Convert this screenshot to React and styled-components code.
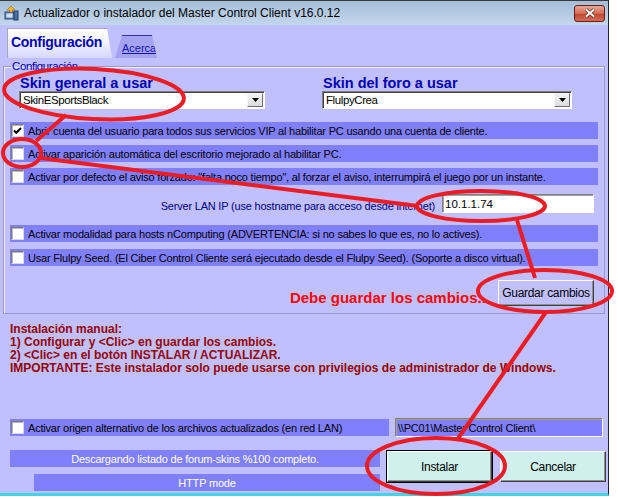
import React from 'react';
import styled, { createGlobalStyle } from 'styled-components';

const GlobalStyle = createGlobalStyle`
  html, body {
    margin: 0;
    padding: 0;
    background: #ffffff;
  }
  body {
    font-family: "Liberation Sans", Arial, sans-serif;
    font-size: 11px;
  }
`;

const Page = styled.div`
  position: relative;
  width: 618px;
  height: 499px;
  overflow: hidden;
`;

const Window = styled.div`
  width: 609px;
  height: 496px;
  box-sizing: border-box;
  border-top: 1px solid #3a3a3a;
  border-right: 1px solid #1b2535;
  border-bottom: 3px solid #3fd5e6;
  background: #c0c0ff;
  display: flex;
  flex-direction: column;
`;

const TitleBar = styled.div`
  height: 24px;
  flex: none;
  display: flex;
  align-items: center;
  padding: 0 3px 0 3px;
  background: linear-gradient(#a4bdd8, #b6cce3 55%, #c3d7eb);
`;

const TitleText = styled.span`
  margin-left: 5px;
  font-size: 12px;
  color: #000;
  white-space: nowrap;
`;

const CloseButton = styled.div`
  margin-left: auto;
  width: 31px;
  height: 17px;
  box-sizing: border-box;
  border: 1px solid #6b1d13;
  border-radius: 3px;
  background: linear-gradient(#e8a898, #d46a55 50%, #c2412c 51%, #d0705a);
  display: flex;
  align-items: center;
  justify-content: center;
`;

const TabStrip = styled.div`
  height: 30px;
  flex: none;
  padding: 3px 0 0 7px;
  display: flex;
  align-items: flex-end;
`;

const ActiveTab = styled.div`
  width: 105px;
  height: 30px;
  box-sizing: border-box;
  clip-path: polygon(0 0, 100px 0, 105px 100%, 0 100%);
  background: linear-gradient(#ffffff, #f4f4ff 45%, #d6d6ff);
  box-shadow: inset 1px 1px 0 #a8a8bc;
  padding: 6px 0 0 4px;
  font-size: 14px;
  font-weight: bold;
  letter-spacing: -0.3px;
  color: #0000b4;
`;

const Tab = styled.div`
  width: 42px;
  height: 23px;
  margin-left: 3px;
  box-sizing: border-box;
  clip-path: polygon(7px 0, 37px 0, 42px 100%, 0 100%);
  background: linear-gradient(#3030a0 0 1px, #a4a4f2 1px);
  padding: 7px 0 0 7px;
  font-size: 11px;
  color: #1414b4;
  text-decoration: underline;
`;

const GroupBox = styled.fieldset`
  width: 602px;
  box-sizing: border-box;
  margin: 1px 0 0 3px;
  padding: 2px 0 7px 0;
  border: 1px solid #9a9ac6;
  box-shadow: inset 1px 1px 0 #eeeeff;
  min-width: 0;
`;

const Legend = styled.legend`
  margin-left: 7px;
  padding: 0 1px;
  font-size: 11.5px;
  line-height: 14px;
  letter-spacing: -0.4px;
  color: #0000c0;
`;

const SkinGrid = styled.div`
  display: grid;
  grid-template-columns: 246px 250px;
  column-gap: 57px;
  padding-left: 15px;
`;

const SkinHeading = styled.div`
  margin-left: 1px;
  padding-top: 1px;
  font-size: 14.5px;
  line-height: 15px;
  font-weight: bold;
  color: #0000b0;
`;

const Combo = styled.div`
  height: 18px;
  box-sizing: border-box;
  background: #fff;
  border: 1px solid;
  border-color: #808080 #ffffff #ffffff #808080;
  box-shadow: inset 1px 1px 0 #404040;
  display: flex;
  align-items: center;
  padding: 0 1px 0 3px;
  font-size: 11.5px;
  letter-spacing: -0.4px;
`;

const ComboArrow = styled.div`
  margin-left: auto;
  width: 16px;
  height: 14px;
  box-sizing: border-box;
  border: 1px solid;
  border-color: #f4f4f4 #707070 #707070 #f4f4f4;
  background: linear-gradient(#f2f2f2, #dcdcdc);
  display: flex;
  align-items: center;
  justify-content: center;
`;

const Rows = styled.div`
  margin-left: 6px;
  width: 588px;
  display: flex;
  flex-direction: column;
`;

const Band = styled.div`
  height: 17px;
  flex: none;
  width: ${(p) => p.$w || 'auto'};
  margin-top: ${(p) => p.$mt || 0}px;
  background: #8080ff;
  display: flex;
  align-items: center;
  justify-content: ${(p) => (p.$center ? 'center' : 'flex-start')};
  color: ${(p) => (p.$center ? '#ffffff' : '#000000')};
  font-size: 11px;
  letter-spacing: -0.2px;
  white-space: nowrap;
`;

const Box = styled.div`
  width: 13px;
  height: 13px;
  flex: none;
  box-sizing: border-box;
  margin: 0 4px 0 1px;
  background: #fff;
  border: 1px solid;
  border-color: #7a7a7a #d8d8d8 #d8d8d8 #7a7a7a;
  box-shadow: inset 1px 1px 0 #b8b8b8;
  display: flex;
  align-items: center;
  justify-content: center;
`;

const ServerRow = styled.div`
  margin-top: 9px;
  height: 19px;
  padding-right: 4px;
  display: flex;
  justify-content: flex-end;
  align-items: flex-end;
  gap: 7px;
`;

const ServerLabel = styled.span`
  font-size: 11px;
  line-height: 14px;
  letter-spacing: -0.2px;
  color: #000080;
  white-space: nowrap;
`;

const TextInput = styled.div`
  width: ${(p) => p.$w}px;
  height: 19px;
  flex: none;
  box-sizing: border-box;
  background: ${(p) => p.$bg || '#ffffff'};
  border: 1px solid;
  border-color: #808080 #ffffff #ffffff #808080;
  box-shadow: inset 1px 1px 0 #a0a0a0;
  display: flex;
  align-items: center;
  padding-left: 2px;
  font-size: ${(p) => p.$fs || 11}px;
  letter-spacing: ${(p) => p.$ls || 0}px;
  white-space: nowrap;
`;

const SaveRow = styled.div`
  margin-top: 14px;
  padding-right: 4px;
  display: flex;
  justify-content: flex-end;
  align-items: flex-end;
  gap: 8px;
`;

const Warning = styled.span`
  font-size: 15px;
  line-height: 17px;
  font-weight: bold;
  color: #ff0000;
  white-space: nowrap;
`;

const Button = styled.div`
  width: ${(p) => p.$w}px;
  height: ${(p) => p.$h}px;
  flex: none;
  box-sizing: border-box;
  background: ${(p) => p.$bg};
  border: 1px solid;
  border-color: #ffffff #404040 #404040 #ffffff;
  box-shadow: ${(p) =>
    p.$default ? '0 0 0 1px #000, inset -1px -1px 0 #909090' : 'inset -1px -1px 0 #909090'};
  display: flex;
  align-items: center;
  justify-content: center;
  font-size: 12px;
  letter-spacing: -0.3px;
  color: #000;
`;

const Instructions = styled.div`
  margin-top: 9px;
  padding-left: 10px;
  font-size: 12px;
  line-height: 13px;
  font-weight: bold;
  color: #960000;
  white-space: nowrap;
`;

const OriginRow = styled.div`
  margin-top: 43px;
  padding-left: 10px;
  display: flex;
  align-items: center;
  gap: 6px;
`;

const BottomGrid = styled.div`
  margin-top: 13px;
  padding-left: 10px;
  display: grid;
  grid-template-columns: 370px 105px 106px;
  column-gap: 7px;
  align-items: start;
`;

const StatusColumn = styled.div`
  display: flex;
  flex-direction: column;
  align-items: flex-end;
`;

const Buttons = styled.div`
  margin-top: 1px;
  grid-column: 2 / 4;
  display: flex;
  gap: 8px;
`;

const Overlay = styled.svg`
  position: absolute;
  left: 0;
  top: 0;
  pointer-events: none;
`;

function Check({ checked }) {
  return (
    <Box>
      {checked && (
        <svg width="9" height="9" viewBox="0 0 9 9">
          <path d="M1 4.5 L3.3 6.8 L8 2" stroke="#000" strokeWidth="2" fill="none" />
        </svg>
      )}
    </Box>
  );
}

function CheckRow({ checked, mt, children }) {
  return (
    <Band $mt={mt}>
      <Check checked={checked} />
      <span>{children}</span>
    </Band>
  );
}

function Select({ value }) {
  return (
    <Combo>
      <span>{value}</span>
      <ComboArrow>
        <svg width="7" height="4" viewBox="0 0 7 4">
          <path d="M0 0 H7 L3.5 4 Z" fill="#000" />
        </svg>
      </ComboArrow>
    </Combo>
  );
}

function AppIcon() {
  return (
    <svg width="16" height="16" viewBox="0 0 16 16">
      <rect x="2" y="7" width="9" height="7" fill="#6d8fb8" stroke="#2d4a78" strokeWidth="1" />
      <rect x="3.5" y="8.5" width="6" height="4" fill="#cfe3f7" />
      <rect x="11" y="6" width="4" height="9" fill="#4d6f9e" stroke="#243f6a" strokeWidth="1" />
      <path d="M8 1 L12 5 H9.5 V7 H6.5 V5 H4 Z" fill="#f2b632" stroke="#a86e10" strokeWidth="0.7" />
    </svg>
  );
}

function Annotations() {
  const s = { stroke: '#ec1c24', strokeWidth: 4, fill: 'none' };
  return (
    <Overlay width="618" height="499" viewBox="0 0 618 499">
      <ellipse cx="94" cy="94" rx="90" ry="25" transform="rotate(3 94 94)" {...s} />
      <line x1="66" y1="115" x2="36" y2="141" {...s} />
      <ellipse cx="22" cy="153" rx="19" ry="14" {...s} />
      <line x1="40" y1="158" x2="418" y2="206" {...s} />
      <ellipse cx="481" cy="206" rx="64" ry="15" {...s} />
      <line x1="517" y1="220" x2="535" y2="278" {...s} />
      <ellipse cx="545" cy="291" rx="67" ry="21" {...s} />
      <line x1="546" y1="312" x2="457" y2="440" {...s} />
      <ellipse cx="436" cy="466" rx="69" ry="28" {...s} />
    </Overlay>
  );
}

export default function App() {
  return (
    <Page>
      <GlobalStyle />
      <Window>
        <TitleBar>
          <AppIcon />
          <TitleText>Actualizador o instalador del Master Control Client v16.0.12</TitleText>
          <CloseButton>
            <svg width="14" height="10" viewBox="0 0 14 10">
              <path d="M3 1.5 L11 8.5 M11 1.5 L3 8.5" stroke="#5a2a22" strokeWidth="3.4" />
              <path d="M3 1.5 L11 8.5 M11 1.5 L3 8.5" stroke="#ffffff" strokeWidth="2" />
            </svg>
          </CloseButton>
        </TitleBar>

        <TabStrip>
          <ActiveTab>Configuración</ActiveTab>
          <Tab>Acerca</Tab>
        </TabStrip>

        <GroupBox>
          <Legend>Configuración</Legend>
          <SkinGrid>
            <div>
              <SkinHeading>Skin general a usar</SkinHeading>
              <Select value="SkinESportsBlack" />
            </div>
            <div>
              <SkinHeading>Skin del foro a usar</SkinHeading>
              <Select value="FlulpyCrea" />
            </div>
          </SkinGrid>

          <Rows>
            <CheckRow checked mt={13}>
              Abrir cuenta del usuario para todos sus servicios VIP al habilitar PC usando una cuenta de cliente.
            </CheckRow>
            <CheckRow mt={6}>
              Activar aparición automática del escritorio mejorado al habilitar PC.
            </CheckRow>
            <CheckRow mt={6}>
              Activar por defecto el aviso forzado: "falta poco tiempo", al forzar el aviso, interrumpirá el juego por un instante.
            </CheckRow>

            <ServerRow>
              <ServerLabel>Server LAN IP (use hostname para acceso desde internet)</ServerLabel>
              <TextInput $w={152} $fs={11.5}>10.1.1.74</TextInput>
            </ServerRow>

            <CheckRow mt={12}>
              Activar modalidad para hosts nComputing (ADVERTENCIA: si no sabes lo que es, no lo actives).
            </CheckRow>
            <CheckRow mt={7}>
              Usar Flulpy Seed. (El Ciber Control Cliente será ejecutado desde el Flulpy Seed). (Soporte a disco virtual).
            </CheckRow>

            <SaveRow>
              <Warning>Debe guardar los cambios...</Warning>
              <Button $w={96} $h={26} $bg="#c0c0ff">Guardar cambios</Button>
            </SaveRow>
          </Rows>
        </GroupBox>

        <Instructions>
          <div>Instalación manual:</div>
          <div>1) Configurar y &lt;Clic&gt; en guardar los cambios.</div>
          <div>2) &lt;Clic&gt; en el botón INSTALAR / ACTUALIZAR.</div>
          <div>IMPORTANTE: Este instalador solo puede usarse con privilegios de administrador de Windows.</div>
        </Instructions>

        <OriginRow>
          <Band $w="379px">
            <Check />
            <span>Activar origen alternativo de los archivos actualizados (en red LAN)</span>
          </Band>
          <TextInput $w={208} $bg="#8080ff" $ls={-0.2}>
            \\PC01\Master Control Client\
          </TextInput>
        </OriginRow>

        <BottomGrid>
          <StatusColumn>
            <Band $w="370px" $center>Descargando listado de forum-skins %100 completo.</Band>
            <Band $w="346px" $mt={7} $center>HTTP mode</Band>
          </StatusColumn>
          <Buttons>
            <Button $w={105} $h={31} $bg="#d0f0ee" $default>Instalar</Button>
            <Button $w={106} $h={31} $bg="#d0f0ee">Cancelar</Button>
          </Buttons>
        </BottomGrid>
      </Window>
      <Annotations />
    </Page>
  );
}
